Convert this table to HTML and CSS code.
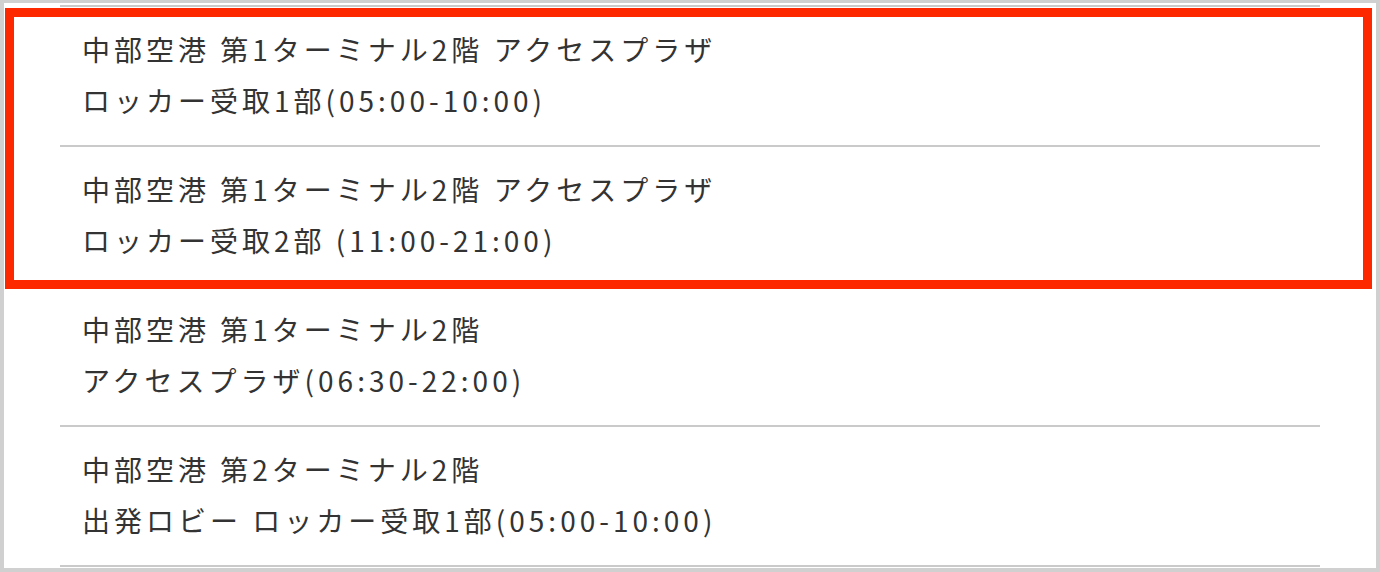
FILE: index.html
```html
<!DOCTYPE html>
<html lang="ja">
<head>
<meta charset="utf-8">
<link rel="stylesheet" href="styles.css">
</head>
<body>
<div class="frame">
  <ul class="list">
    <li class="item"><span>中部空港 第1ターミナル2階 アクセスプラザ</span><span>ロッカー受取1部(05:00-10:00)</span></li>
    <li class="item"><span>中部空港 第1ターミナル2階 アクセスプラザ</span><span>ロッカー受取2部 (11:00-21:00)</span></li>
    <li class="item"><span>中部空港 第1ターミナル2階</span><span>アクセスプラザ(06:30-22:00)</span></li>
    <li class="item"><span>中部空港 第2ターミナル2階</span><span>出発ロビー ロッカー受取1部(05:00-10:00)</span></li>
  </ul>
  <div class="highlight"></div>
</div>
</body>
</html>
```
FILE: styles.css
```css
html, body {
  margin: 0;
  padding: 0;
  background: #ffffff;
}
.frame {
  position: relative;
  box-sizing: border-box;
  width: 1380px;
  height: 572px;
  border-style: solid;
  border-color: #d0d0d0;
  border-width: 3px 4px 4px 4px;
  background: #ffffff;
  overflow: hidden;
}
.list {
  list-style: none;
  margin: 2px 0 0 56px;
  padding: 0;
  width: 1260px;
  border-top: 2px solid #cacaca;
}
.item {
  box-sizing: border-box;
  height: 140px;
  padding: 17px 0 0 22px;
  border-bottom: 2px solid #cacaca;
  display: flex;
  flex-direction: column;
  font-family: "Noto Sans CJK JP", "Noto Sans", sans-serif;
  font-size: 28px;
  line-height: 51px;
  letter-spacing: 4px;
  color: #333333;
}
.highlight {
  position: absolute;
  left: 1px;
  top: 5px;
  width: 1367px;
  height: 281px;
  box-sizing: border-box;
  border: 9px solid #fe2800;
}
```
